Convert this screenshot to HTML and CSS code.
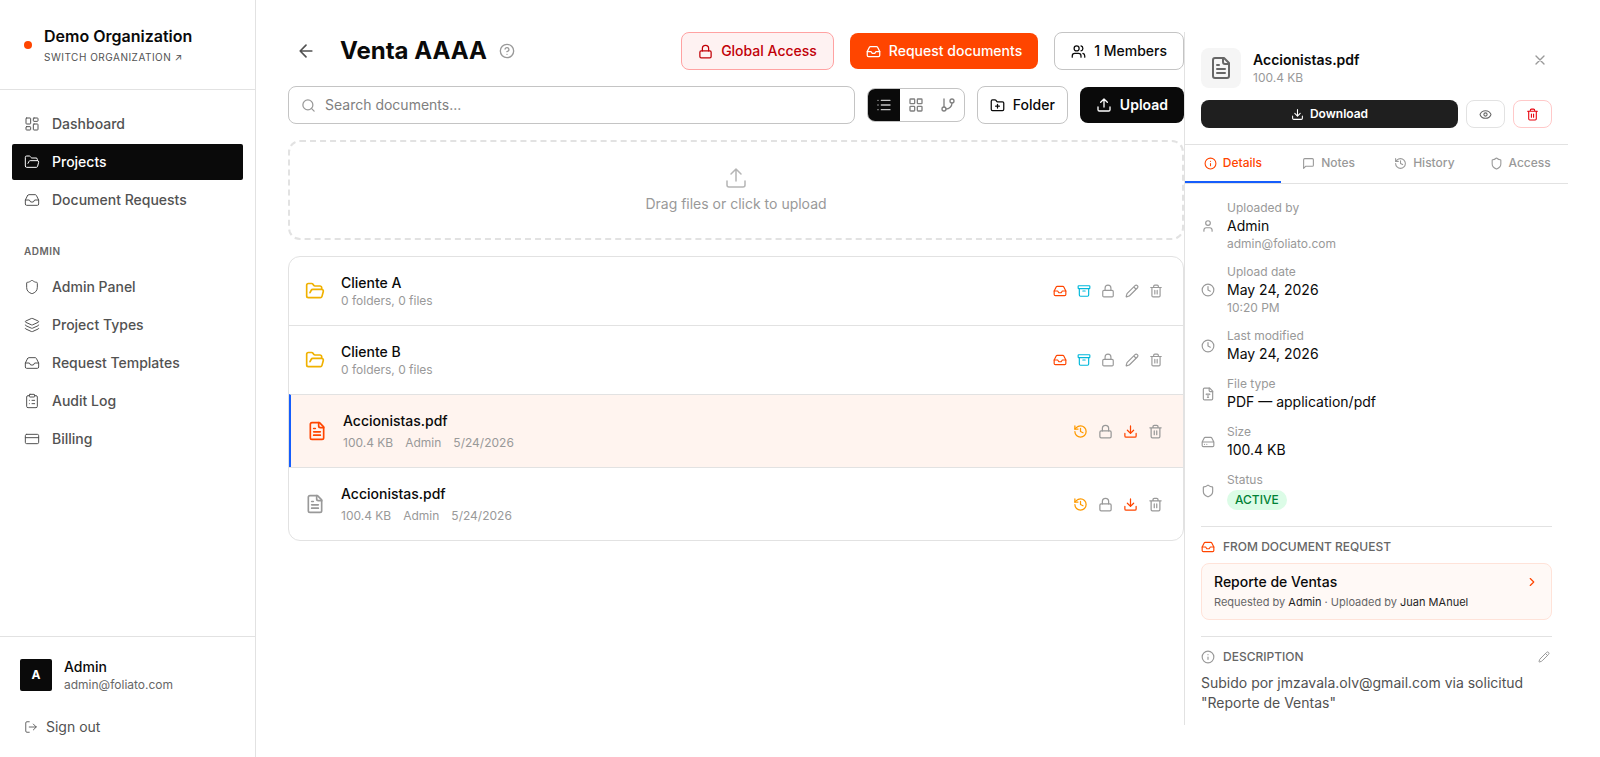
FILE: index.html
```html
<!DOCTYPE html>
<html lang="en">
<head>
  <meta charset="UTF-8">
  <meta name="viewport" content="width=device-width, initial-scale=1">
  <title>Venta AAAA</title>
  <link rel="stylesheet" href="styles.css">
</head>
<body>
<svg class="sprite" aria-hidden="true">
  <symbol id="dashboard" viewBox="0 0 24 24"><rect width="7" height="9" x="3" y="3" rx="1"/><rect width="7" height="5" x="14" y="3" rx="1"/><rect width="7" height="9" x="14" y="12" rx="1"/><rect width="7" height="5" x="3" y="16" rx="1"/></symbol>
  <symbol id="folder-open" viewBox="0 0 24 24"><path d="m6 14 1.5-2.9A2 2 0 0 1 9.24 10H20a2 2 0 0 1 1.94 2.5l-1.54 6a2 2 0 0 1-1.95 1.5H4a2 2 0 0 1-2-2V5a2 2 0 0 1 2-2h3.9a2 2 0 0 1 1.69.9l.81 1.2a2 2 0 0 0 1.67.9H18a2 2 0 0 1 2 2v2"/></symbol>
  <symbol id="inbox" viewBox="0 0 24 24"><path d="M22 12h-6l-2 3h-4l-2-3H2"/><path d="M5.45 5.11 2 12v6a2 2 0 0 0 2 2h16a2 2 0 0 0 2-2v-6l-3.45-6.89A2 2 0 0 0 16.76 4H7.24a2 2 0 0 0-1.79 1.11z"/></symbol>
  <symbol id="shield" viewBox="0 0 24 24"><path d="M20 13c0 5-3.5 7.5-7.66 8.95a1 1 0 0 1-.67-.01C7.5 20.5 4 18 4 13V6a1 1 0 0 1 1-1c2 0 4.5-1.2 6.24-2.72a1.17 1.17 0 0 1 1.52 0C14.51 3.81 17 5 19 5a1 1 0 0 1 1 1z"/></symbol>
  <symbol id="layers" viewBox="0 0 24 24"><path d="M12.83 2.18a2 2 0 0 0-1.66 0L2.6 6.08a1 1 0 0 0 0 1.83l8.58 3.91a2 2 0 0 0 1.66 0l8.58-3.9a1 1 0 0 0 0-1.83z"/><path d="M2 12a1 1 0 0 0 .58.91l8.6 3.91a2 2 0 0 0 1.65 0l8.58-3.9A1 1 0 0 0 22 12"/><path d="M2 17a1 1 0 0 0 .58.91l8.6 3.91a2 2 0 0 0 1.65 0l8.58-3.9A1 1 0 0 0 22 17"/></symbol>
  <symbol id="clipboard" viewBox="0 0 24 24"><rect width="8" height="4" x="8" y="2" rx="1"/><path d="M16 4h2a2 2 0 0 1 2 2v14a2 2 0 0 1-2 2H6a2 2 0 0 1-2-2V6a2 2 0 0 1 2-2h2M12 11h4M12 16h4M8 11h.01M8 16h.01"/></symbol>
  <symbol id="card" viewBox="0 0 24 24"><rect width="20" height="14" x="2" y="5" rx="2"/><path d="M2 10h20"/></symbol>
  <symbol id="log-out" viewBox="0 0 24 24"><path d="m16 17 5-5-5-5M21 12H9M9 21H5a2 2 0 0 1-2-2V5a2 2 0 0 1 2-2h4"/></symbol>
  <symbol id="arrow-left" viewBox="0 0 24 24"><path d="m12 19-7-7 7-7M19 12H5"/></symbol>
  <symbol id="help" viewBox="0 0 24 24"><circle cx="12" cy="12" r="10"/><path d="M9.09 9a3 3 0 0 1 5.83 1c0 2-3 3-3 3M12 17h.01"/></symbol>
  <symbol id="lock" viewBox="0 0 24 24"><rect width="18" height="11" x="3" y="11" rx="2"/><path d="M7 11V7a5 5 0 0 1 10 0v4"/></symbol>
  <symbol id="users" viewBox="0 0 24 24"><path d="M16 21v-2a4 4 0 0 0-4-4H6a4 4 0 0 0-4 4v2"/><circle cx="9" cy="7" r="4"/><path d="M22 21v-2a4 4 0 0 0-3-3.87M16 3.13a4 4 0 0 1 0 7.75"/></symbol>
  <symbol id="search" viewBox="0 0 24 24"><circle cx="11" cy="11" r="8"/><path d="m21 21-4.34-4.34"/></symbol>
  <symbol id="list" viewBox="0 0 24 24"><path d="M3 5h.01M3 12h.01M3 19h.01M8 5h13M8 12h13M8 19h13"/></symbol>
  <symbol id="grid" viewBox="0 0 24 24"><rect width="7" height="7" x="3" y="3" rx="1"/><rect width="7" height="7" x="14" y="3" rx="1"/><rect width="7" height="7" x="14" y="14" rx="1"/><rect width="7" height="7" x="3" y="14" rx="1"/></symbol>
  <symbol id="branch" viewBox="0 0 24 24"><path d="M6 3v12"/><circle cx="18" cy="6" r="3"/><circle cx="6" cy="18" r="3"/><path d="M18 9a9 9 0 0 1-9 9"/></symbol>
  <symbol id="folder-plus" viewBox="0 0 24 24"><path d="M12 10v6M9 13h6M20 20a2 2 0 0 0 2-2V8a2 2 0 0 0-2-2h-7.9a2 2 0 0 1-1.69-.9L9.6 3.9A2 2 0 0 0 7.93 3H4a2 2 0 0 0-2 2v13a2 2 0 0 0 2 2Z"/></symbol>
  <symbol id="upload" viewBox="0 0 24 24"><path d="M12 3v12M17 8l-5-5-5 5M21 15v4a2 2 0 0 1-2 2H5a2 2 0 0 1-2-2v-4"/></symbol>
  <symbol id="download" viewBox="0 0 24 24"><path d="M12 15V3M7 10l5 5 5-5M21 15v4a2 2 0 0 1-2 2H5a2 2 0 0 1-2-2v-4"/></symbol>
  <symbol id="archive" viewBox="0 0 24 24"><rect width="20" height="5" x="2" y="3" rx="1"/><path d="M4 8v11a2 2 0 0 0 2 2h12a2 2 0 0 0 2-2V8M10 12h4"/></symbol>
  <symbol id="pencil" viewBox="0 0 24 24"><path d="M21.17 6.81a1 1 0 0 0-3.99-3.99L3.84 16.17a2 2 0 0 0-.5.83l-1.32 4.35a.5.5 0 0 0 .62.62l4.35-1.32a2 2 0 0 0 .83-.5zM15 5l4 4"/></symbol>
  <symbol id="trash" viewBox="0 0 24 24"><path d="M3 6h18M19 6v14a2 2 0 0 1-2 2H7a2 2 0 0 1-2-2V6M8 6V4a2 2 0 0 1 2-2h4a2 2 0 0 1 2 2v2M10 11v6M14 11v6"/></symbol>
  <symbol id="history" viewBox="0 0 24 24"><path d="M3 12a9 9 0 1 0 9-9 9.75 9.75 0 0 0-6.74 2.74L3 8"/><path d="M3 3v5h5M12 7v5l4 2"/></symbol>
  <symbol id="file-text" viewBox="0 0 24 24"><path d="M15 2H6a2 2 0 0 0-2 2v16a2 2 0 0 0 2 2h12a2 2 0 0 0 2-2V7Z"/><path d="M14 2v4a2 2 0 0 0 2 2h4M10 9H8M16 13H8M16 17H8"/></symbol>
  <symbol id="file-type" viewBox="0 0 24 24"><path d="M15 2H6a2 2 0 0 0-2 2v16a2 2 0 0 0 2 2h12a2 2 0 0 0 2-2V7Z"/><path d="M14 2v4a2 2 0 0 0 2 2h4M9 13v-1h6v1M12 12v6M11 18h2"/></symbol>
  <symbol id="close" viewBox="0 0 24 24"><path d="M18 6 6 18M6 6l12 12"/></symbol>
  <symbol id="eye" viewBox="0 0 24 24"><path d="M2.06 12.35a1 1 0 0 1 0-.7 10.75 10.75 0 0 1 19.88 0 1 1 0 0 1 0 .7 10.75 10.75 0 0 1-19.88 0"/><circle cx="12" cy="12" r="3"/></symbol>
  <symbol id="info" viewBox="0 0 24 24"><circle cx="12" cy="12" r="10"/><path d="M12 16v-4M12 8h.01"/></symbol>
  <symbol id="message" viewBox="0 0 24 24"><path d="M21 15a2 2 0 0 1-2 2H7l-4 4V5a2 2 0 0 1 2-2h14a2 2 0 0 1 2 2z"/></symbol>
  <symbol id="user" viewBox="0 0 24 24"><path d="M19 21v-2a4 4 0 0 0-4-4H9a4 4 0 0 0-4 4v2"/><circle cx="12" cy="7" r="4"/></symbol>
  <symbol id="clock" viewBox="0 0 24 24"><circle cx="12" cy="12" r="10"/><path d="M12 6v6l4 2"/></symbol>
  <symbol id="drive" viewBox="0 0 24 24"><path d="M22 12H2M5.45 5.11 2 12v6a2 2 0 0 0 2 2h16a2 2 0 0 0 2-2v-6l-3.45-6.89A2 2 0 0 0 16.76 4H7.24a2 2 0 0 0-1.79 1.11zM6 16h.01M10 16h.01"/></symbol>
  <symbol id="chevron" viewBox="0 0 24 24"><path d="m9 18 6-6-6-6"/></symbol>
</svg>

<div class="app">
  <aside class="sidebar">
    <a href="#" class="org">
      <span class="org-dot"></span>
      <span class="org-text">
        <span class="org-name">Demo Organization</span>
        <span class="org-switch">Switch organization ↗</span>
      </span>
    </a>
    <nav class="nav">
      <a href="#" class="nav-link"><svg class="icon i16 thin"><use href="#dashboard"/></svg>Dashboard</a>
      <a href="#" class="nav-link active"><svg class="icon i16 thin"><use href="#folder-open"/></svg>Projects</a>
      <a href="#" class="nav-link"><svg class="icon i16 thin"><use href="#inbox"/></svg>Document Requests</a>
      <h2 class="nav-title">Admin</h2>
      <a href="#" class="nav-link"><svg class="icon i16 thin"><use href="#shield"/></svg>Admin Panel</a>
      <a href="#" class="nav-link"><svg class="icon i16 thin"><use href="#layers"/></svg>Project Types</a>
      <a href="#" class="nav-link"><svg class="icon i16 thin"><use href="#inbox"/></svg>Request Templates</a>
      <a href="#" class="nav-link"><svg class="icon i16 thin"><use href="#clipboard"/></svg>Audit Log</a>
      <a href="#" class="nav-link"><svg class="icon i16 thin"><use href="#card"/></svg>Billing</a>
    </nav>
    <div class="account">
      <div class="user">
        <span class="avatar">A</span>
        <div>
          <p class="user-name">Admin</p>
          <p class="user-mail">admin@foliato.com</p>
        </div>
      </div>
      <button type="button" class="sign-out"><svg class="icon i14 thin"><use href="#log-out"/></svg>Sign out</button>
    </div>
  </aside>

  <main class="main">
    <section class="content">
      <header class="page-head">
        <a href="#" class="back" aria-label="Back"><svg class="icon i20"><use href="#arrow-left"/></svg></a>
        <h1>Venta AAAA</h1>
        <button type="button" class="help" aria-label="Help"><svg class="icon i16"><use href="#help"/></svg></button>
        <div class="head-actions">
          <button type="button" class="btn danger"><svg class="icon i15"><use href="#lock"/></svg>Global Access</button>
          <button type="button" class="btn primary"><svg class="icon i15"><use href="#inbox"/></svg>Request documents</button>
          <button type="button" class="btn outline"><svg class="icon i15"><use href="#users"/></svg>1 Members</button>
        </div>
      </header>

      <div class="toolbar">
        <label class="search">
          <svg class="icon i15"><use href="#search"/></svg>
          <input type="text" placeholder="Search documents..." aria-label="Search documents">
        </label>
        <div class="views">
          <button type="button" class="current" aria-label="List"><svg class="icon i16"><use href="#list"/></svg></button>
          <button type="button" aria-label="Grid"><svg class="icon i16"><use href="#grid"/></svg></button>
          <button type="button" aria-label="Tree"><svg class="icon i16"><use href="#branch"/></svg></button>
        </div>
        <button type="button" class="btn outline small"><svg class="icon i15"><use href="#folder-plus"/></svg>Folder</button>
        <button type="button" class="btn dark"><svg class="icon i16"><use href="#upload"/></svg>Upload</button>
      </div>

      <button type="button" class="dropzone">
        <svg class="icon i24 thin"><use href="#upload"/></svg>
        Drag files or click to upload
      </button>

      <ul class="files">
        <li class="row">
          <svg class="icon i20 folder"><use href="#folder-open"/></svg>
          <div class="row-text">
            <p class="row-name">Cliente A</p>
            <p class="row-sub">0 folders, 0 files</p>
          </div>
          <div class="row-actions">
            <button type="button" class="orange" aria-label="Request"><svg class="icon i14"><use href="#inbox"/></svg></button>
            <button type="button" class="cyan" aria-label="Archive"><svg class="icon i14"><use href="#archive"/></svg></button>
            <button type="button" aria-label="Access"><svg class="icon i14"><use href="#lock"/></svg></button>
            <button type="button" aria-label="Rename"><svg class="icon i14"><use href="#pencil"/></svg></button>
            <button type="button" aria-label="Delete"><svg class="icon i14"><use href="#trash"/></svg></button>
          </div>
        </li>
        <li class="row">
          <svg class="icon i20 folder"><use href="#folder-open"/></svg>
          <div class="row-text">
            <p class="row-name">Cliente B</p>
            <p class="row-sub">0 folders, 0 files</p>
          </div>
          <div class="row-actions">
            <button type="button" class="orange" aria-label="Request"><svg class="icon i14"><use href="#inbox"/></svg></button>
            <button type="button" class="cyan" aria-label="Archive"><svg class="icon i14"><use href="#archive"/></svg></button>
            <button type="button" aria-label="Access"><svg class="icon i14"><use href="#lock"/></svg></button>
            <button type="button" aria-label="Rename"><svg class="icon i14"><use href="#pencil"/></svg></button>
            <button type="button" aria-label="Delete"><svg class="icon i14"><use href="#trash"/></svg></button>
          </div>
        </li>
        <li class="row selected">
          <svg class="icon i20 file"><use href="#file-text"/></svg>
          <div class="row-text">
            <p class="row-name">Accionistas.pdf</p>
            <p class="row-meta"><span>100.4 KB</span><span>Admin</span><span>5/24/2026</span></p>
          </div>
          <div class="row-actions">
            <button type="button" class="amber" aria-label="History"><svg class="icon i15"><use href="#history"/></svg></button>
            <button type="button" aria-label="Access"><svg class="icon i15"><use href="#lock"/></svg></button>
            <button type="button" class="orange" aria-label="Download"><svg class="icon i15"><use href="#download"/></svg></button>
            <button type="button" aria-label="Delete"><svg class="icon i15"><use href="#trash"/></svg></button>
          </div>
        </li>
        <li class="row">
          <svg class="icon i20 file"><use href="#file-text"/></svg>
          <div class="row-text">
            <p class="row-name">Accionistas.pdf</p>
            <p class="row-meta"><span>100.4 KB</span><span>Admin</span><span>5/24/2026</span></p>
          </div>
          <div class="row-actions">
            <button type="button" class="amber" aria-label="History"><svg class="icon i15"><use href="#history"/></svg></button>
            <button type="button" aria-label="Access"><svg class="icon i15"><use href="#lock"/></svg></button>
            <button type="button" class="orange" aria-label="Download"><svg class="icon i15"><use href="#download"/></svg></button>
            <button type="button" aria-label="Delete"><svg class="icon i15"><use href="#trash"/></svg></button>
          </div>
        </li>
      </ul>
    </section>

    <aside class="panel">
      <header class="panel-head">
        <div class="panel-file">
          <span class="panel-icon"><svg class="icon i24"><use href="#file-text"/></svg></span>
          <div class="panel-title">
            <h2>Accionistas.pdf</h2>
            <p>100.4 KB</p>
          </div>
          <button type="button" class="close" aria-label="Close"><svg class="icon i16"><use href="#close"/></svg></button>
        </div>
        <div class="panel-actions">
          <button type="button" class="download"><svg class="icon i13"><use href="#download"/></svg>Download</button>
          <button type="button" class="square" aria-label="Preview"><svg class="icon i13"><use href="#eye"/></svg></button>
          <button type="button" class="square delete" aria-label="Delete"><svg class="icon i13"><use href="#trash"/></svg></button>
        </div>
      </header>
      <nav class="tabs">
        <button type="button" class="current"><svg class="icon i13"><use href="#info"/></svg>Details</button>
        <button type="button"><svg class="icon i13"><use href="#message"/></svg>Notes</button>
        <button type="button"><svg class="icon i13"><use href="#history"/></svg>History</button>
        <button type="button"><svg class="icon i13"><use href="#shield"/></svg>Access</button>
      </nav>
      <div class="panel-body">
        <ul class="details">
          <li>
            <svg class="icon i14"><use href="#user"/></svg>
            <div>
              <p class="label">Uploaded by</p>
              <p class="value">Admin</p>
              <p class="label">admin@foliato.com</p>
            </div>
          </li>
          <li>
            <svg class="icon i14"><use href="#clock"/></svg>
            <div>
              <p class="label">Upload date</p>
              <p class="value">May 24, 2026</p>
              <p class="label">10:20 PM</p>
            </div>
          </li>
          <li>
            <svg class="icon i14"><use href="#clock"/></svg>
            <div>
              <p class="label">Last modified</p>
              <p class="value">May 24, 2026</p>
            </div>
          </li>
          <li>
            <svg class="icon i14"><use href="#file-type"/></svg>
            <div>
              <p class="label">File type</p>
              <p class="value">PDF — application/pdf</p>
            </div>
          </li>
          <li>
            <svg class="icon i14"><use href="#drive"/></svg>
            <div>
              <p class="label">Size</p>
              <p class="value">100.4 KB</p>
            </div>
          </li>
          <li>
            <svg class="icon i14"><use href="#shield"/></svg>
            <div>
              <p class="label">Status</p>
              <p class="badge">ACTIVE</p>
            </div>
          </li>
        </ul>

        <section class="block">
          <h3><svg class="icon i14 orange"><use href="#inbox"/></svg>From document request</h3>
          <a href="#" class="request">
            <span class="request-title">Reporte de Ventas <svg class="icon i14 orange"><use href="#chevron"/></svg></span>
            <span class="request-by">Requested by <b>Admin</b> · Uploaded by <b>Juan MAnuel</b></span>
          </a>
        </section>

        <section class="block">
          <h3>
            <svg class="icon i14"><use href="#info"/></svg>Description
            <button type="button" class="edit" aria-label="Edit description"><svg class="icon i12"><use href="#pencil"/></svg></button>
          </h3>
          <p class="description">Subido por jmzavala.olv@gmail.com via solicitud "Reporte de Ventas"</p>
        </section>
      </div>
    </aside>
  </main>
</div>
</body>
</html>
```
FILE: styles.css
```css
* {
  margin: 0;
  padding: 0;
  box-sizing: border-box;
}

body {
  font-family: Inter, "Liberation Sans", sans-serif;
  font-size: 14px;
  line-height: 20px;
  color: #0a0a0a;
  background-color: #fff;
}

a {
  color: inherit;
  text-decoration: none;
}

ul {
  list-style: none;
}

button,
input {
  font: inherit;
  color: inherit;
  background: none;
  border: none;
}

button {
  display: flex;
  align-items: center;
  justify-content: center;
  cursor: pointer;
}

.sprite {
  display: none;
}

/* icons */
.icon {
  flex-shrink: 0;
  fill: none;
  stroke: currentColor;
  stroke-width: 2;
  stroke-linecap: round;
  stroke-linejoin: round;
}

.icon.thin {
  stroke-width: 1.5;
}

.i12 { width: 12px; height: 12px; }
.i13 { width: 13px; height: 13px; }
.i14 { width: 14px; height: 14px; }
.i15 { width: 15px; height: 15px; }
.i16 { width: 16px; height: 16px; }
.i20 { width: 20px; height: 20px; }
.i24 { width: 24px; height: 24px; }

.app {
  display: flex;
  min-height: 100vh;
}

/* sidebar */
.sidebar {
  width: 256px;
  flex-shrink: 0;
  display: flex;
  flex-direction: column;
  border-right: 1px solid #e2e2e2;
}

.org {
  display: flex;
  align-items: center;
  gap: 12px;
  padding: 24px 24px 23px;
  border-bottom: 1px solid #e2e2e2;
}

.org-dot {
  width: 8px;
  height: 8px;
  border-radius: 50%;
  background-color: #ff4500;
}

.org-text {
  display: flex;
  flex-direction: column;
}

.org-name {
  font-size: 16px;
  line-height: 24px;
  font-weight: 600;
}

.org-switch {
  font-size: 10px;
  line-height: 18px;
  letter-spacing: 0.5px;
  text-transform: uppercase;
  color: #525252;
}

.nav {
  flex: 1;
  display: flex;
  flex-direction: column;
  gap: 2px;
  padding: 16px 12px;
}

.nav-link {
  display: flex;
  align-items: center;
  gap: 12px;
  padding: 8px 12px;
  border-radius: 2px;
  font-weight: 500;
  color: #525252;
}

.nav-link.active {
  color: #fff;
  background-color: #0a0a0a;
}

.nav-title {
  padding: 23px 12px 8px;
  font-size: 10px;
  line-height: 16px;
  font-weight: 600;
  letter-spacing: 0.5px;
  text-transform: uppercase;
  color: #666;
}

.account {
  padding: 12px;
  border-top: 1px solid #e2e2e2;
}

.user {
  display: flex;
  align-items: center;
  gap: 12px;
  padding: 8px;
}

.avatar {
  width: 32px;
  height: 32px;
  border-radius: 2px;
  background-color: #0a0a0a;
  color: #fff;
  font-size: 12px;
  line-height: 32px;
  font-weight: 700;
  text-align: center;
}

.user-name {
  font-weight: 500;
}

.user-mail {
  font-size: 12px;
  line-height: 16px;
  color: #666;
}

.sign-out {
  gap: 8px;
  margin-top: 8px;
  padding: 8px 12px;
  color: #525252;
}

/* page */
.main {
  flex: 1;
  min-width: 0;
  display: flex;
  padding: 32px;
}

.content {
  flex: 1;
  min-width: 0;
  display: flex;
  flex-direction: column;
  gap: 16px;
}

.page-head {
  display: flex;
  align-items: center;
}

.back {
  padding: 8px;
  color: #525252;
}

.back svg,
.help svg {
  display: block;
}

.page-head h1 {
  margin-left: 16px;
  font-size: 24px;
  line-height: 32px;
  font-weight: 700;
}

.help {
  margin-left: 12px;
  color: #999;
}

.head-actions {
  display: flex;
  align-items: center;
  gap: 16px;
  margin-left: auto;
}

.btn {
  gap: 8px;
  padding: 8px 16px;
  border-radius: 8px;
  font-weight: 500;
  white-space: nowrap;
}

.btn.danger {
  border: 1px solid #ffa2a2;
  background-color: #fef2f2;
  color: #c10007;
}

.btn.primary {
  background-color: #ff4500;
  color: #fff;
}

.btn.outline {
  border: 1px solid #c4c4c4;
}

.btn.small {
  padding: 8px 12px;
}

.btn.dark {
  background-color: #0a0a0a;
  color: #fff;
  font-weight: 600;
}

.toolbar {
  display: flex;
  align-items: center;
  gap: 12px;
}

.search {
  flex: 1;
  display: flex;
  align-items: center;
  gap: 9px;
  padding: 8px 12px;
  border: 1px solid #c4c4c4;
  border-radius: 8px;
  color: #999;
}

.search input {
  flex: 1;
  min-width: 0;
  outline: none;
  color: #0a0a0a;
}

.search input::placeholder {
  color: #808080;
}

.views {
  display: flex;
  border: 1px solid #c4c4c4;
  border-radius: 8px;
  overflow: hidden;
}

.views button {
  padding: 8px;
  color: #808080;
}

.views .current {
  background-color: #0a0a0a;
  color: #c4c4c4;
}

.dropzone {
  flex-direction: column;
  gap: 4px;
  padding: 24px;
  border: 2px dashed #e2e2e2;
  border-radius: 12px;
  color: #999;
}

.dropzone svg {
  color: #b5b5b5;
}

/* file list */
.files {
  border: 1px solid #e2e2e2;
  border-radius: 12px;
  overflow: hidden;
}

.row {
  display: flex;
  align-items: center;
  gap: 16px;
  padding: 16px;
}

.row + .row {
  border-top: 1px solid #e2e2e2;
}

.row.selected {
  border-left: 2px solid #155dfc;
  background-color: #fff4ef;
}

.row-text {
  flex: 1;
}

.row-name {
  font-weight: 500;
}

.row-sub,
.row-meta {
  font-size: 12px;
  line-height: 16px;
  color: #999;
}

.row-meta {
  display: flex;
  gap: 12px;
  margin-top: 4px;
}

.row-actions {
  display: flex;
  gap: 2px;
}

.row-actions button {
  padding: 4px;
  color: #999;
}

.folder {
  color: #f0b100;
}

.file {
  color: #999;
}

.selected .file,
.row-actions .orange,
.icon.orange {
  color: #ff4500;
}

.row-actions .cyan {
  color: #00b8db;
}

.row-actions .amber {
  color: #fe9a00;
}

/* details panel */
.panel {
  width: 384px;
  flex-shrink: 0;
  border-left: 1px solid #e2e2e2;
}

.panel-head {
  padding: 16px;
  border-bottom: 1px solid #e2e2e2;
}

.panel-file {
  display: flex;
  align-items: center;
  gap: 12px;
}

.panel-icon {
  padding: 8px;
  border-radius: 8px;
  background-color: #f5f5f5;
  color: #666;
}

.panel-icon svg {
  display: block;
}

.panel-title {
  flex: 1;
}

.panel-title h2 {
  font-size: 14px;
  line-height: 20px;
  font-weight: 600;
}

.panel-title p {
  font-size: 12px;
  line-height: 16px;
  color: #999;
}

.close {
  align-self: flex-start;
  padding: 4px;
  color: #999;
}

.panel-actions {
  display: flex;
  gap: 8px;
  margin-top: 12px;
}

.download {
  flex: 1;
  gap: 6px;
  padding: 6px 12px;
  border-radius: 8px;
  background-color: #1f1f1f;
  color: #fff;
  font-size: 12px;
  line-height: 16px;
  font-weight: 600;
}

.square {
  padding: 0 12px;
  border: 1px solid #e2e2e2;
  border-radius: 8px;
  color: #666;
}

.square.delete {
  border-color: #ffc9c9;
  color: #e7000b;
}

.tabs {
  display: flex;
  border-bottom: 1px solid #e2e2e2;
}

.tabs button {
  flex: 1;
  gap: 6px;
  padding: 10px 0;
  border-bottom: 2px solid transparent;
  font-size: 12px;
  line-height: 16px;
  font-weight: 500;
  color: #999;
}

.tabs .current {
  border-color: #155dfc;
  color: #ff4500;
}

.panel-body {
  padding: 16px 16px 12px;
}

.details {
  display: flex;
  flex-direction: column;
  gap: 12px;
}

.details li {
  display: flex;
  align-items: center;
  gap: 12px;
  color: #999;
}

.label {
  font-size: 12px;
  line-height: 16px;
}

.value {
  color: #0a0a0a;
}

.badge {
  width: fit-content;
  margin-top: 2px;
  padding: 2px 8px;
  border-radius: 10px;
  background-color: #dcfce7;
  color: #008236;
  font-size: 12px;
  line-height: 16px;
  font-weight: 500;
}

.block {
  margin-top: 16px;
  padding-top: 12px;
  border-top: 1px solid #e2e2e2;
}

.block h3 {
  display: flex;
  align-items: center;
  gap: 8px;
  margin-bottom: 8px;
  font-size: 12px;
  line-height: 16px;
  font-weight: 500;
  text-transform: uppercase;
  color: #666;
}

.block h3 svg:not(.orange) {
  color: #999;
}

.request {
  display: flex;
  flex-direction: column;
  gap: 2px;
  padding: 8px 12px;
  border: 1px solid #ffe3d9;
  border-radius: 8px;
  background-color: #fff9f6;
}

.request-title {
  display: flex;
  align-items: center;
  justify-content: space-between;
  font-weight: 500;
}

.request-by {
  font-size: 11px;
  line-height: 17px;
  color: #666;
}

.request-by b {
  font-weight: 400;
  color: #1f1f1f;
}

.edit {
  margin-left: auto;
  padding: 2px;
}

.description {
  color: #525252;
}
```
